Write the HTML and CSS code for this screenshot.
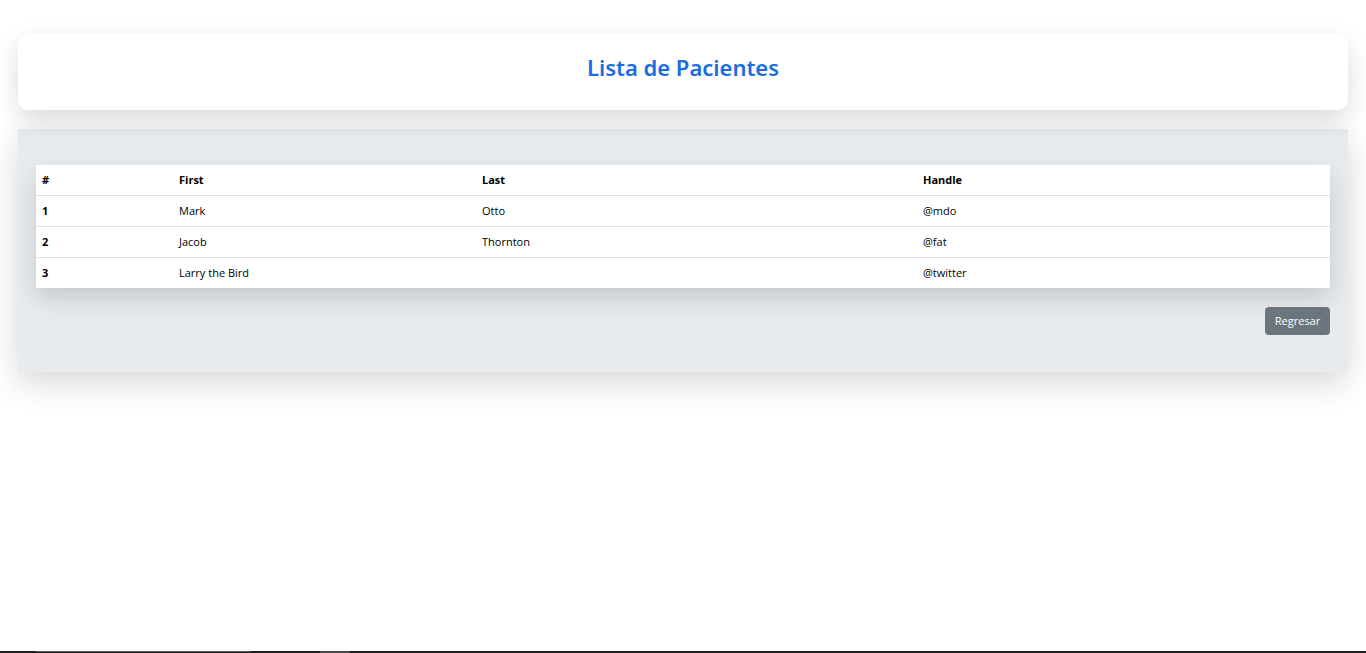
FILE: index.html
```html
<!DOCTYPE html>
<html lang="es">
<head>
<meta charset="utf-8">
<title>Lista de Pacientes</title>
<link rel="stylesheet" href="styles.css">
</head>
<body>
<div class="page">
  <header class="title-card">
    <h3 class="title">Lista de Pacientes</h3>
  </header>
  <section class="panel">
    <table class="table">
      <thead>
        <tr>
          <th class="c1">#</th>
          <th class="c2">First</th>
          <th class="c3">Last</th>
          <th class="c4">Handle</th>
        </tr>
      </thead>
      <tbody>
        <tr><th>1</th><td>Mark</td><td>Otto</td><td>@mdo</td></tr>
        <tr><th>2</th><td>Jacob</td><td>Thornton</td><td>@fat</td></tr>
        <tr><th>3</th><td>Larry the Bird</td><td></td><td>@twitter</td></tr>
      </tbody>
    </table>
    <div class="actions">
      <button class="btn">Regresar</button>
    </div>
  </section>
</div>
<div class="taskbar"><span class="seg seg1"></span><span class="seg seg2"></span></div>
</body>
</html>
```
FILE: styles.css
```css
* { box-sizing: border-box; }
html, body { margin: 0; padding: 0; background: #fff; }
body {
  font-family: "Open Sans", "Noto Sans", "Liberation Sans", sans-serif;
  color: #000;
}
.page {
  padding: 34px 18px 40px 18px;
  display: flex;
  flex-direction: column;
  gap: 19px;
}
.title-card {
  position: relative;
  z-index: 1;
  background: #fff;
  border-radius: 10px;
  height: 76px;
  padding-bottom: 10px;
  display: flex;
  align-items: center;
  justify-content: center;
  box-shadow: 0 10px 26px rgba(0,0,0,0.14);
}
.title {
  margin: 0;
  font-family: "Noto Sans", "Open Sans", sans-serif;
  font-weight: 600;
  font-size: 22px;
  color: #1a6de0;
}
.panel {
  background: #e8ebee;
  padding: 36px 18px 37px 18px;
  box-shadow: 0 10px 30px rgba(0,0,0,0.16);
  display: flex;
  flex-direction: column;
  gap: 19px;
}
.table {
  width: 100%;
  border-collapse: collapse;
  background: #fff;
  font-size: 11px;
  box-shadow: 0 10px 22px rgba(0,0,0,0.15);
}
.table th, .table td {
  text-align: left;
  padding: 0 6px;
  height: 31px;
  border-top: 1px solid #dee2e6;
}
.table thead th { border-top: none; height: 30px; font-weight: 700; }
.table tbody th { font-weight: 700; }
.table td { font-weight: 400; }
.c1 { width: 137px; }
.c2 { width: 303px; }
.c3 { width: 441px; }
.actions { display: flex; justify-content: flex-end; }
.btn {
  background: #6c757d;
  color: #fff;
  border: none;
  border-radius: 4px;
  font-family: "Open Sans", "Noto Sans", sans-serif;
  font-size: 11px;
  width: 65px;
  height: 28px;
  padding: 0 0 2px 0;
}
.taskbar {
  position: fixed;
  left: 0; right: 0; bottom: 0;
  height: 2px;
  background: #1f1f1f;
}
.seg { position: absolute; top: 0; height: 1px; background: #5a5a5a; }
.seg1 { left: 36px; width: 214px; }
.seg2 { left: 320px; width: 30px; background: #4a4a4a; height: 2px; }
```
